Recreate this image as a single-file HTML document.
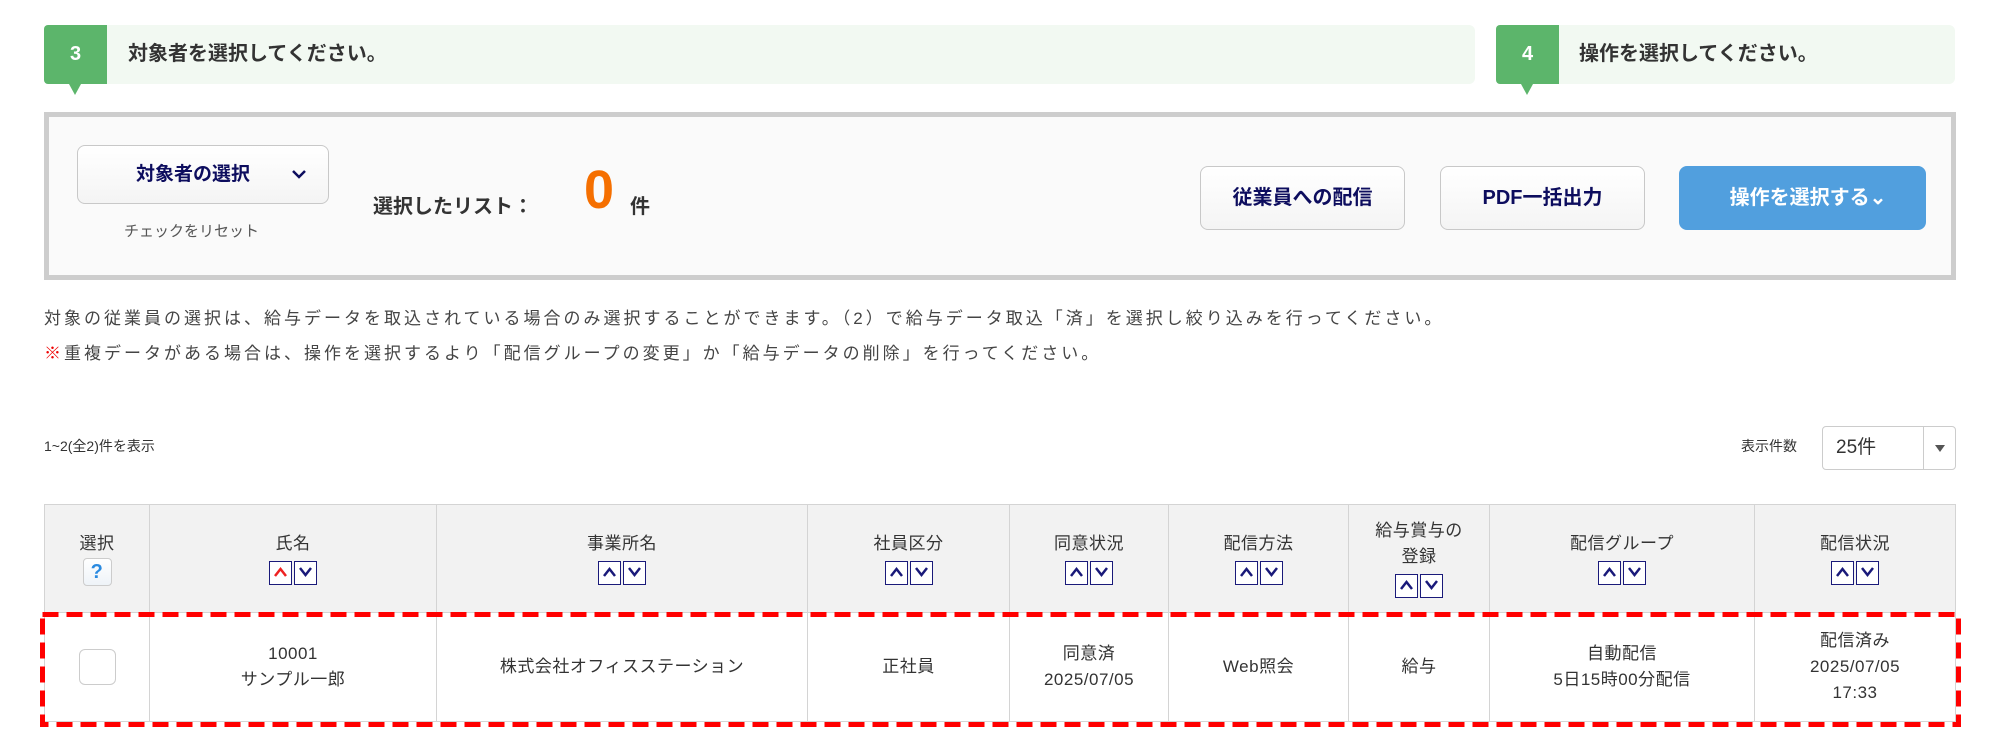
<!DOCTYPE html>
<html><head><meta charset="utf-8"><style>
*{box-sizing:border-box;margin:0;padding:0}
body{width:2000px;height:746px;background:#fff;position:relative;overflow:hidden;font-family:"Liberation Sans","Noto Sans CJK JP",sans-serif;color:#333}
.a{position:absolute}
.ban{position:absolute;top:25px;height:59px;background:#f2f9f2;border-radius:6px}
.num{position:absolute;left:0;top:0;width:63px;height:59px;background:#5cb56b;color:#fff;font-weight:bold;font-size:20px;text-align:center;line-height:59px;border-radius:4px 0 0 4px}
.num:after{content:"";position:absolute;left:25px;top:59px;border-left:6px solid transparent;border-right:6px solid transparent;border-top:11px solid #5cb56b}
.bt{position:absolute;font-weight:bold;font-size:20px;top:0;line-height:59px}
.btn{position:absolute;border:1px solid #c8c8c8;border-radius:8px;background:linear-gradient(#fff,#f4f4f4);color:#0d0d5e;font-weight:bold;font-size:20px;text-align:center}
th,td{border:1px solid #d4d4d4;text-align:center;font-weight:normal;font-size:17px;letter-spacing:0.5px}
table{border-collapse:collapse;position:absolute;left:44px;top:504px;width:1912px}
th{background:#f2f2f2;height:108px;vertical-align:top;padding-top:26px;line-height:26px}
td{height:109px;line-height:26px;background:#fff}
.s{display:inline-block;width:23px;height:24px;border:1.5px solid #1a1a7a;background:#fff;margin:4px 1px 0;vertical-align:top;position:relative}
.s svg{position:absolute;left:3px;top:4px}
.note{font-size:17px;color:#444;letter-spacing:3px}
</style></head><body>
<div class="ban" style="left:44px;width:1431px"><div class="num">3</div><div class="bt" style="left:84px">対象者を選択してください。</div></div>
<div class="ban" style="left:1496px;width:459px"><div class="num">4</div><div class="bt" style="left:83px">操作を選択してください。</div></div>

<div class="a" style="left:44px;top:112px;width:1912px;height:168px;border:5px solid #cdcdcd;background:#fafafa"></div>
<div class="btn" style="left:77px;top:145px;width:252px;height:59px;line-height:57px;font-size:19px;padding-right:20px">対象者の選択<svg class="a" style="left:213px;top:23px" width="16" height="12" viewBox="0 0 16 12"><path d="M2 2 L8 8 L14 2" fill="none" stroke="#0d0d5e" stroke-width="2.5"/></svg></div>
<div class="a" style="left:124px;top:220px;font-size:15px;color:#555">チェックをリセット</div>
<div class="a" style="left:373px;top:190px;font-size:20px;font-weight:bold">選択したリスト：</div>
<div class="a" style="left:584px;top:160px;font-size:54px;font-weight:bold;color:#f56f00;line-height:60px">0</div>
<div class="a" style="left:630px;top:190px;font-size:20px;font-weight:bold">件</div>
<div class="btn" style="left:1200px;top:166px;width:205px;height:64px;line-height:62px">従業員への配信</div>
<div class="btn" style="left:1440px;top:166px;width:205px;height:64px;line-height:62px">PDF一括出力</div>
<div class="btn" style="left:1679px;top:166px;width:247px;height:64px;line-height:62px;background:#519fde;border-color:#519fde;color:#fff">&nbsp;&nbsp;操作を選択する⌄</div>

<div class="a note" style="left:44px;top:304px">対象の従業員の選択は、給与データを取込されている場合のみ選択することができます。（2）で給与データ取込「済」を選択し絞り込みを行ってください。</div>
<div class="a note" style="left:44px;top:339px"><span style="color:#e00">※</span>重複データがある場合は、操作を選択するより「配信グループの変更」か「給与データの削除」を行ってください。</div>

<div class="a" style="left:44px;top:436px;font-size:14px">1~2(全2)件を表示</div>
<div class="a" style="left:1741px;top:436px;font-size:14px">表示件数</div>
<div class="a" style="left:1822px;top:426px;width:134px;height:44px;border:1px solid #ccc;border-radius:4px;background:#fff;font-size:19px;line-height:42px;padding-left:13px">25件<div class="a" style="left:100px;top:0;width:1px;height:42px;background:#ccc"></div><div class="a" style="left:112px;top:18px;border-left:5px solid transparent;border-right:5px solid transparent;border-top:7px solid #555"></div></div>

<table>
<tr>
<th style="width:105px">選択<br><span style="display:inline-block;width:29px;height:28px;border:1px solid #ccc;border-radius:4px;background:linear-gradient(#fff,#eef3f8);color:#2a8ae0;font-weight:bold;font-size:20px;line-height:26px;margin-top:1px">?</span></th>
<th style="width:287px">氏名<br><span class="s"><svg width="15" height="12"><path d="M2 10 L7.5 3 L13 10" fill="none" stroke="#e22" stroke-width="2.5"/></svg></span><span class="s"><svg width="15" height="12"><path d="M2 2 L7.5 9 L13 2" fill="none" stroke="#1a1a7a" stroke-width="2.5"/></svg></span></th>
<th style="width:371px">事業所名<br><span class="s"><svg width="15" height="12"><path d="M2 10 L7.5 3 L13 10" fill="none" stroke="#1a1a7a" stroke-width="2.5"/></svg></span><span class="s"><svg width="15" height="12"><path d="M2 2 L7.5 9 L13 2" fill="none" stroke="#1a1a7a" stroke-width="2.5"/></svg></span></th>
<th style="width:202px">社員区分<br><span class="s"><svg width="15" height="12"><path d="M2 10 L7.5 3 L13 10" fill="none" stroke="#1a1a7a" stroke-width="2.5"/></svg></span><span class="s"><svg width="15" height="12"><path d="M2 2 L7.5 9 L13 2" fill="none" stroke="#1a1a7a" stroke-width="2.5"/></svg></span></th>
<th style="width:159px">同意状況<br><span class="s"><svg width="15" height="12"><path d="M2 10 L7.5 3 L13 10" fill="none" stroke="#1a1a7a" stroke-width="2.5"/></svg></span><span class="s"><svg width="15" height="12"><path d="M2 2 L7.5 9 L13 2" fill="none" stroke="#1a1a7a" stroke-width="2.5"/></svg></span></th>
<th style="width:180px">配信方法<br><span class="s"><svg width="15" height="12"><path d="M2 10 L7.5 3 L13 10" fill="none" stroke="#1a1a7a" stroke-width="2.5"/></svg></span><span class="s"><svg width="15" height="12"><path d="M2 2 L7.5 9 L13 2" fill="none" stroke="#1a1a7a" stroke-width="2.5"/></svg></span></th>
<th style="width:141px;padding-top:13px">給与賞与の<br>登録<br><span class="s"><svg width="15" height="12"><path d="M2 10 L7.5 3 L13 10" fill="none" stroke="#1a1a7a" stroke-width="2.5"/></svg></span><span class="s"><svg width="15" height="12"><path d="M2 2 L7.5 9 L13 2" fill="none" stroke="#1a1a7a" stroke-width="2.5"/></svg></span></th>
<th style="width:265px">配信グループ<br><span class="s"><svg width="15" height="12"><path d="M2 10 L7.5 3 L13 10" fill="none" stroke="#1a1a7a" stroke-width="2.5"/></svg></span><span class="s"><svg width="15" height="12"><path d="M2 2 L7.5 9 L13 2" fill="none" stroke="#1a1a7a" stroke-width="2.5"/></svg></span></th>
<th>配信状況<br><span class="s"><svg width="15" height="12"><path d="M2 10 L7.5 3 L13 10" fill="none" stroke="#1a1a7a" stroke-width="2.5"/></svg></span><span class="s"><svg width="15" height="12"><path d="M2 2 L7.5 9 L13 2" fill="none" stroke="#1a1a7a" stroke-width="2.5"/></svg></span></th>
</tr>
<tr>
<td><span style="display:inline-block;width:37px;height:36px;border:1.5px solid #ccc;border-radius:6px;background:#fff;vertical-align:middle"></span></td>
<td>10001<br>サンプル一郎</td>
<td>株式会社オフィスステーション</td>
<td>正社員</td>
<td>同意済<br>2025/07/05</td>
<td>Web照会</td>
<td>給与</td>
<td>自動配信<br>5日15時00分配信</td>
<td>配信済み<br>2025/07/05<br>17:33</td>
</tr>
</table>
<svg class="a" style="left:0;top:0" width="2000" height="746"><rect x="42.5" y="614.5" width="1916" height="110" fill="none" stroke="#f00" stroke-width="5" stroke-dasharray="16 8"/></svg>
</body></html>
